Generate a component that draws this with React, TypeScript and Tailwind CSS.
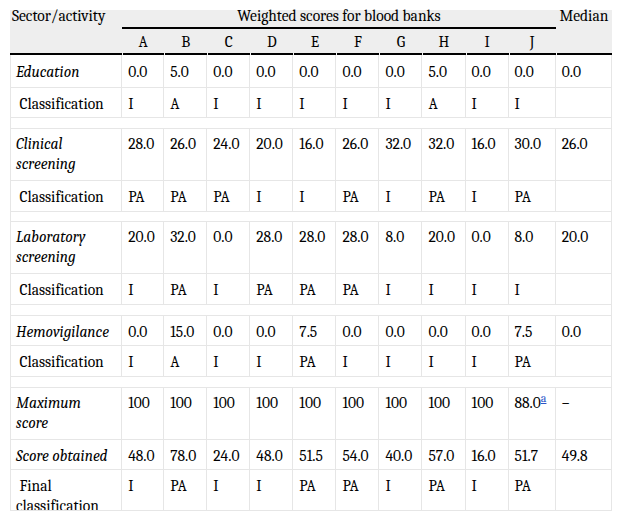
import React from "react";

type Section = {
  label: string[];
  values: string[];
  median: string;
  cls: string[];
  h: number;
  pt: number;
  clsH: number;
  spH: number;
};

const sections: Section[] = [
  {
    label: ["Education"],
    values: ["0.0", "5.0", "0.0", "0.0", "0.0", "0.0", "0.0", "5.0", "0.0", "0.0"],
    median: "0.0",
    cls: ["I", "A", "I", "I", "I", "I", "I", "A", "I", "I"],
    h: 32,
    pt: 7,
    clsH: 29,
    spH: 10,
  },
  {
    label: ["Clinical", "screening"],
    values: ["28.0", "26.0", "24.0", "20.0", "16.0", "26.0", "32.0", "32.0", "16.0", "30.0"],
    median: "26.0",
    cls: ["PA", "PA", "PA", "I", "I", "PA", "I", "PA", "I", "PA"],
    h: 51,
    pt: 5,
    clsH: 30,
    spH: 9,
  },
  {
    label: ["Laboratory", "screening"],
    values: ["20.0", "32.0", "0.0", "28.0", "28.0", "28.0", "8.0", "20.0", "0.0", "8.0"],
    median: "20.0",
    cls: ["I", "PA", "I", "PA", "PA", "PA", "I", "I", "I", "I"],
    h: 51,
    pt: 5,
    clsH: 30,
    spH: 10,
  },
  {
    label: ["Hemovigilance"],
    values: ["0.0", "15.0", "0.0", "0.0", "7.5", "0.0", "0.0", "0.0", "0.0", "7.5"],
    median: "0.0",
    cls: ["I", "A", "I", "I", "PA", "I", "I", "I", "I", "PA"],
    h: 29,
    pt: 6,
    clsH: 30,
    spH: 10,
  },
];

const letters = ["A", "B", "C", "D", "E", "F", "G", "H", "I", "J"];
const colWidths = [112, 42, 43, 43, 43, 43, 43, 43, 43, 43, 47, 56];

const cellBase = "p-0 align-top border-r border-b border-[#e6e6e6]";
const firstCell = "p-0 align-top border-l border-r border-b border-[#e6e6e6]";

function Row({
  label,
  italic,
  indent,
  cells,
  h,
  pt,
  clip,
}: {
  label: React.ReactNode;
  italic?: boolean;
  indent?: boolean;
  cells: React.ReactNode[];
  h: number;
  pt: number;
  clip?: boolean;
}) {
  return (
    <tr>
      <td className={firstCell}>
        <div
          className={`pl-[5px] pr-[2px] leading-[20px] overflow-hidden whitespace-nowrap ${italic ? "italic" : ""}`}
          style={{ height: h, paddingTop: pt }}
        >
          {indent ? "\u00a0" : null}
          {label}
        </div>
      </td>
      {cells.map((c, i) => (
        <td key={i} className={cellBase}>
          <div
            className={`pl-[6px] leading-[20px] whitespace-nowrap ${clip ? "overflow-hidden" : ""}`}
            style={{ height: h, paddingTop: pt }}
          >
            {c}
          </div>
        </td>
      ))}
    </tr>
  );
}

function Spacer({ h }: { h: number }) {
  return (
    <tr>
      <td colSpan={12} className="p-0 border-l border-r border-b border-[#e6e6e6]">
        <div style={{ height: h }} />
      </td>
    </tr>
  );
}

function lines(l: string[]) {
  return l.map((s, i) => (
    <React.Fragment key={i}>
      {i > 0 && <br />}
      {s}
    </React.Fragment>
  ));
}

export default function App() {
  return (
    <div className="bg-white w-[622px] h-[522px] overflow-hidden pt-[10px] pl-[10px] text-black text-[15.5px] font-serif [font-family:'Liberation_Serif',serif]">
      <table className="table-fixed border-separate border-spacing-0 w-[602px]">
        <colgroup>
          {colWidths.map((w, i) => (
            <col key={i} style={{ width: w }} />
          ))}
        </colgroup>
        <thead>
          <tr className="bg-[#eeeeee]">
            <th rowSpan={2} className="p-0 align-top text-left font-normal">
              <div className="pl-[2px] leading-[13px] h-[43px] whitespace-nowrap">Sector/activity</div>
            </th>
            <th colSpan={10} className="p-0 align-top font-normal border-b-2 border-black">
              <div className="h-[17px] leading-[13px] text-center">Weighted scores for blood banks</div>
            </th>
            <th rowSpan={2} className="p-0 align-top font-normal">
              <div className="leading-[13px] h-[43px] text-center">Median</div>
            </th>
          </tr>
          <tr className="bg-[#eeeeee]">
            {letters.map((l) => (
              <th key={l} className="p-0 align-top font-normal">
                <div className="h-[24px] pt-[3px] leading-[20px] text-center">{l}</div>
              </th>
            ))}
          </tr>
          <tr>
            {colWidths.map((_, i) => (
              <td
                key={i}
                className={`p-0 leading-none bg-black ${i > 0 ? "shadow-[inset_1px_0_0_#f4f4f4]" : ""}`}
              >
                <div className="h-[2px]" />
              </td>
            ))}
          </tr>
        </thead>
        <tbody>
          {sections.map((s, idx) => (
            <React.Fragment key={idx}>
              <Row
                label={lines(s.label)}
                italic
                cells={[...s.values, s.median]}
                h={s.h}
                pt={s.pt}
              />
              <Row
                label="Classification"
                indent
                cells={[...s.cls, ""]}
                h={s.clsH}
                pt={6}
              />
              <Spacer h={s.spH} />
            </React.Fragment>
          ))}
          <Row
            label={lines(["Maximum", "score"])}
            italic
            cells={[
              "100",
              "100",
              "100",
              "100",
              "100",
              "100",
              "100",
              "100",
              "100",
              <>
                88.0
                <sup>
                  <a className="text-[#2a55c8] underline text-[12px]">a</a>
                </sup>
              </>,
              "\u2013",
            ]}
            h={51}
            pt={5}
          />
          <Row
            label="Score obtained"
            italic
            cells={["48.0", "78.0", "24.0", "48.0", "51.5", "54.0", "40.0", "57.0", "16.0", "51.7", "49.8"]}
            h={29}
            pt={6}
          />
          <Row
            label={lines(["Final", "classification"])}
            indent
            cells={["I", "PA", "I", "I", "PA", "PA", "I", "PA", "I", "PA", ""]}
            h={40}
            pt={6}
            clip
          />
        </tbody>
      </table>
    </div>
  );
}
